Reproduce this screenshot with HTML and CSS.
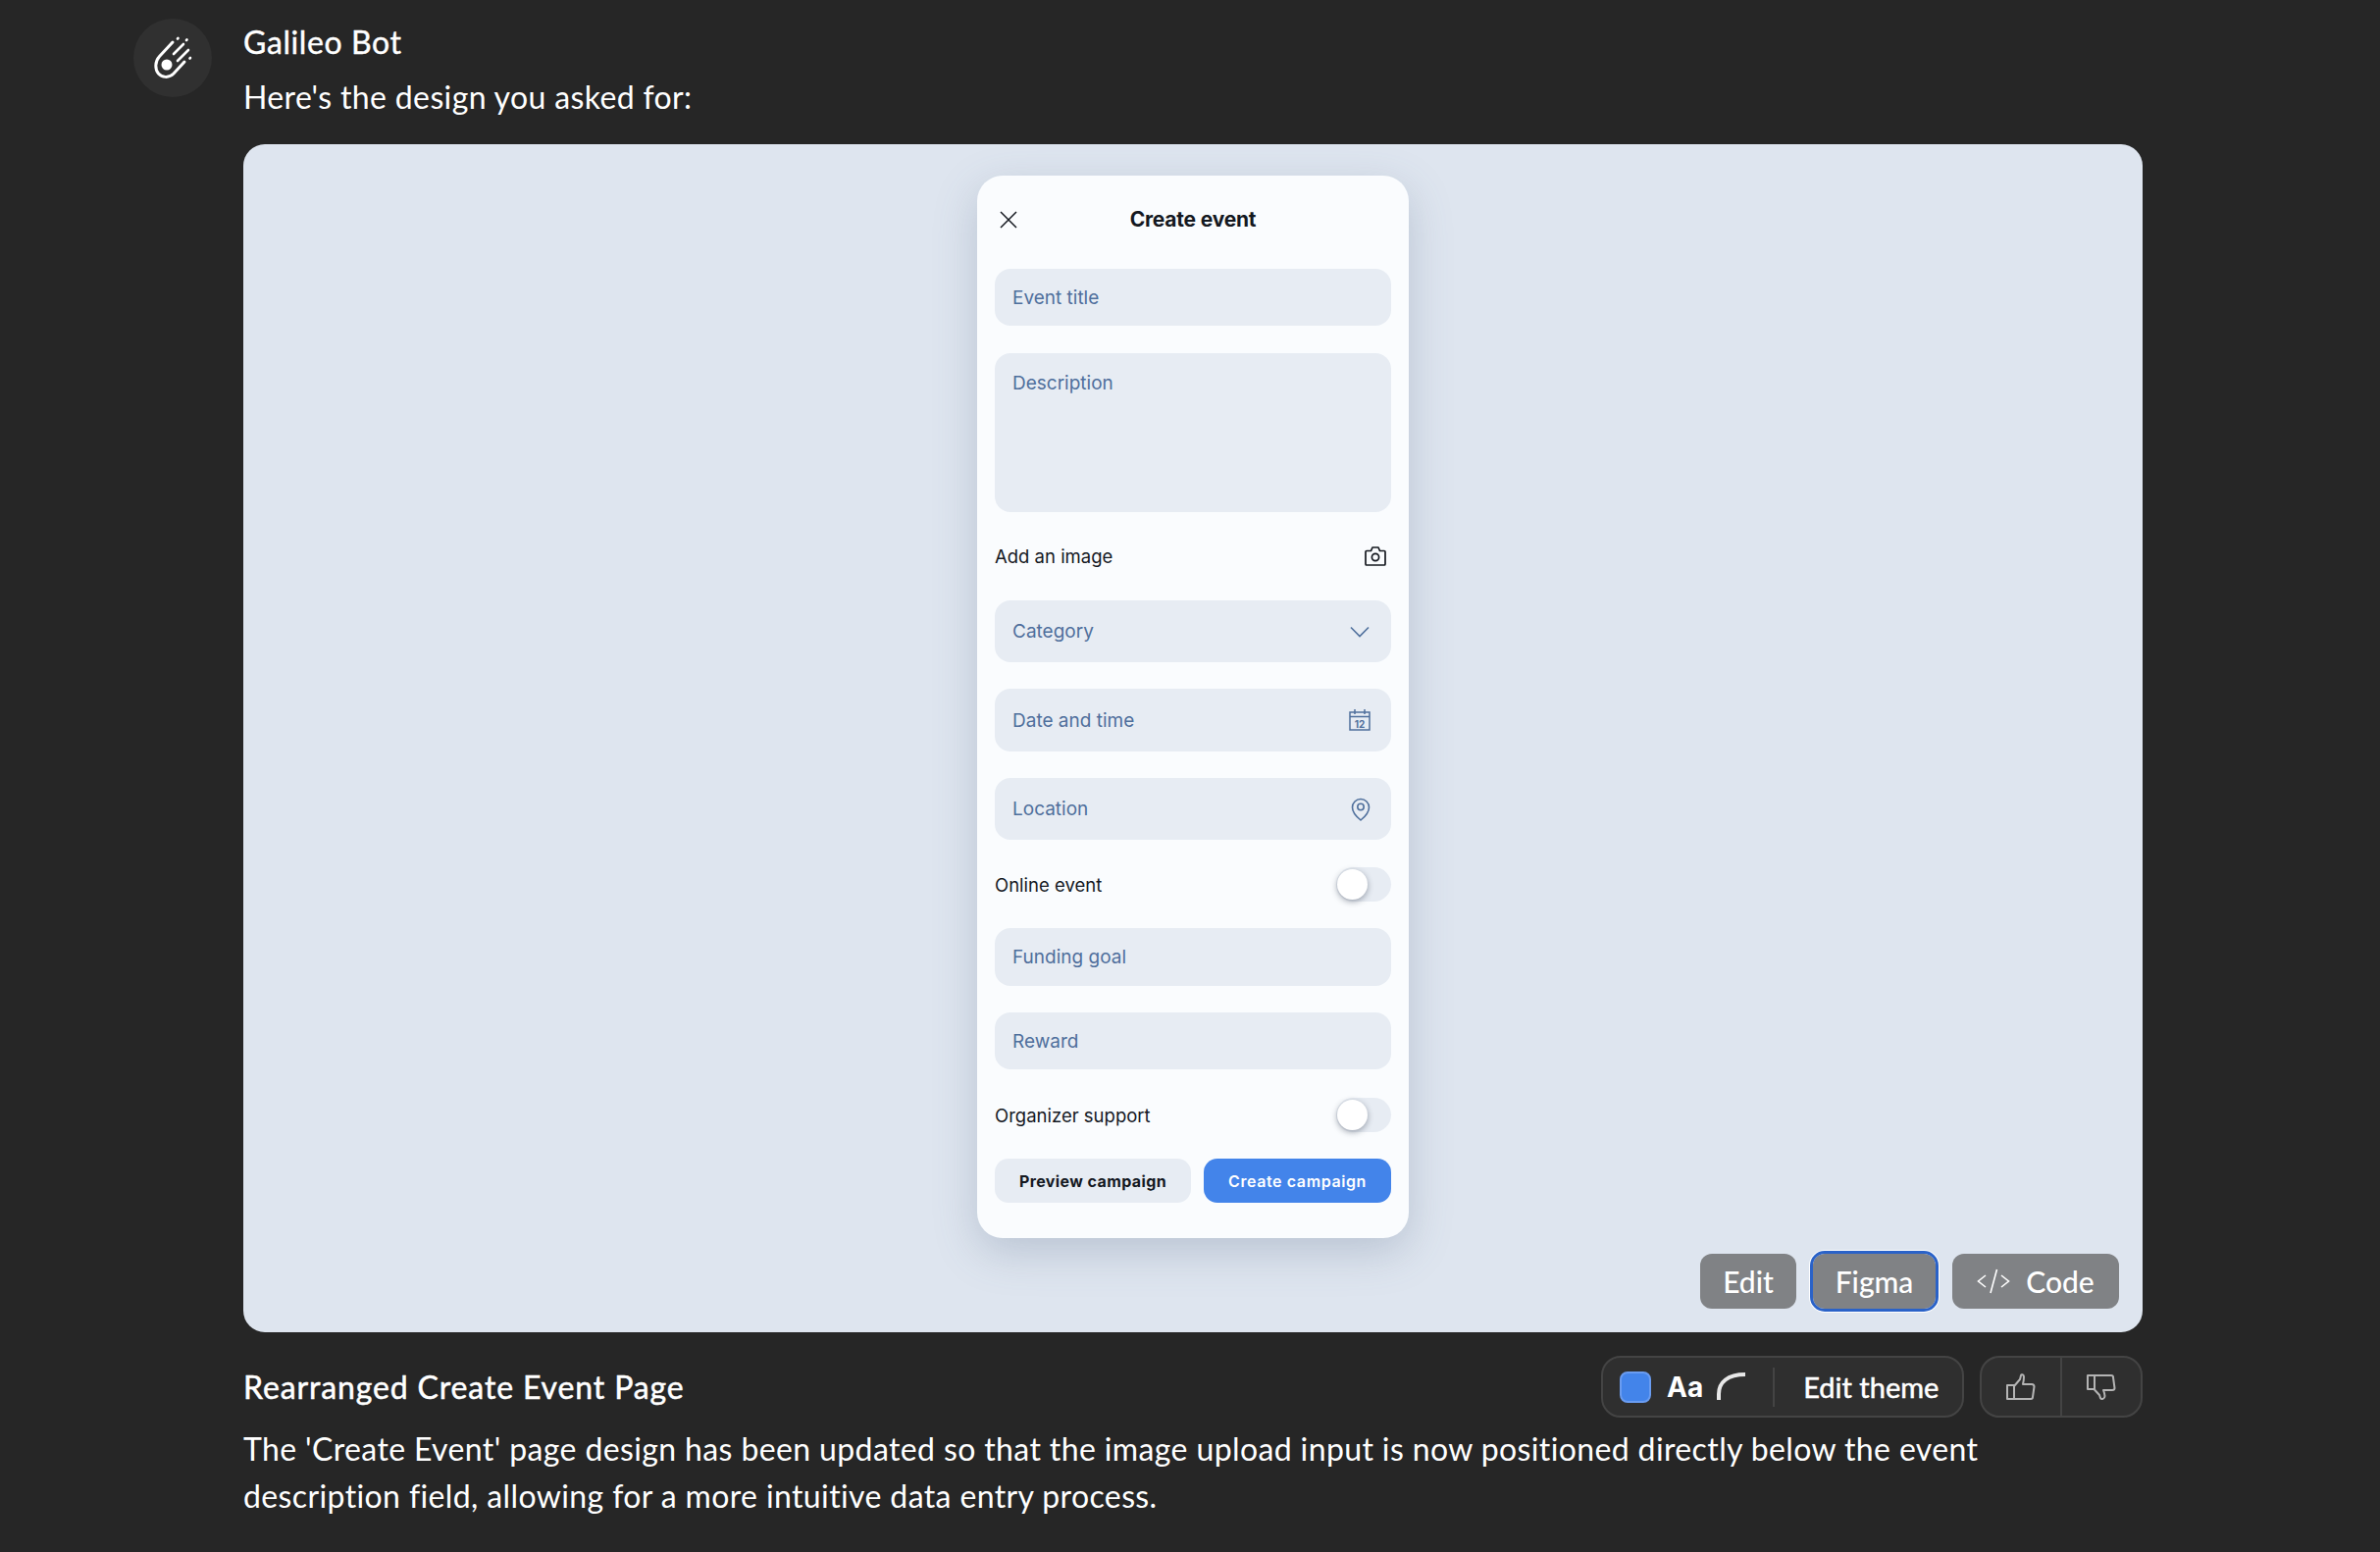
FILE: index.html
```html
<!DOCTYPE html>
<html lang="en">
<head>
<meta charset="utf-8">
<title>Galileo Bot</title>
<link rel="stylesheet" href="styles.css">
</head>
<body>
<main class="chat">
  <div class="avatar">
    <svg width="60" height="60" viewBox="0 0 60 60" fill="none" stroke="#fff" stroke-width="2.600" stroke-linecap="round">
      <circle cx="24" cy="37" r="5.500" fill="#fff" stroke="none"/>
      <path d="M30 14 16.500 28.500C11.500 34 12 42 15.500 46S26 51 31 46L42 34" stroke-width="3"/>
      <path d="M35 10.500l.5-.5M44 12l.5-.5M41 16 31 26M46 22 35 33M47.500 30.500l.5-.5"/>
    </svg>
  </div>
  <div class="content">
    <div class="name">Galileo Bot</div>
    <div class="intro">Here's the design you asked for:</div>
    <section class="preview">
      <div class="card">
        <header class="card-head">
          <svg class="close" width="20" height="20" viewBox="0 0 20 20" fill="none" stroke="#14181f" stroke-width="1.5"><path d="M2 2 18 18M18 2 2 18"/></svg>
          <h2>Create event</h2>
        </header>
        <div class="field f58 first">Event title</div>
        <div class="field area">Description</div>
        <div class="row image-row">
          <span>Add an image</span>
          <svg width="22" height="20" viewBox="0 0 22 20" fill="none" stroke="#14181f" stroke-width="1.7" stroke-linejoin="round"><path d="M2 4.500h4.500L8 1h6l1.500 3.500H20c.6 0 1 .4 1 1V18c0 .6-.4 1-1 1H2c-.6 0-1-.4-1-1V5.500c0-.6.4-1 1-1Z"/><circle cx="11" cy="11" r="3.600"/></svg>
        </div>
        <div class="field f63 cat">
          <span>Category</span>
          <svg width="20" height="12" viewBox="0 0 20 12" fill="none" stroke="#4f6f9c" stroke-width="1.6"><path d="M1 1.500 10 10.500 19 1.500"/></svg>
        </div>
        <div class="field f63 date">
          <span>Date and time</span>
          <svg width="22" height="22" viewBox="0 0 22 22" fill="none" stroke="#4f6f9c" stroke-width="1.500"><path d="M1 3h20v18H1ZM1 7.500h20M6 0v5M16 0v5"/><text x="11" y="18.500" text-anchor="middle" class="cal-num">12</text></svg>
        </div>
        <div class="field f63 loc">
          <span>Location</span>
          <svg width="20" height="24" viewBox="0 0 20 24" fill="none" stroke="#4f6f9c" stroke-width="1.6"><path d="M10 23C5 19 1.500 15 1.500 10a8.500 8.500 0 0 1 17 0C18.500 15 15 19 10 23Z"/><circle cx="10" cy="9.500" r="3.200"/></svg>
        </div>
        <div class="row toggle-row">
          <span>Online event</span>
          <div class="toggle"><div class="knob"></div></div>
        </div>
        <div class="field fund">Funding goal</div>
        <div class="field f58 reward">Reward</div>
        <div class="row toggle-row org">
          <span>Organizer support</span>
          <div class="toggle"><div class="knob"></div></div>
        </div>
        <div class="card-actions">
          <button class="btn-light">Preview campaign</button>
          <button class="btn-blue">Create campaign</button>
        </div>
      </div>
      <div class="overlay-actions">
        <button class="tool edit">Edit</button>
        <button class="tool figma">Figma</button>
        <button class="tool code">
          <svg width="34" height="26" viewBox="0 0 34 26" fill="none" stroke="#fff" stroke-width="1.6"><path d="M9 7 1.500 13 9 19M25 7l7.500 6L25 19M20.500 1 14 25"/></svg>
          Code
        </button>
      </div>
    </section>
    <div class="meta">
      <h3>Rearranged Create Event Page</h3>
      <div class="meta-tools">
        <div class="theme">
          <span class="swatch"></span>
          <span class="aa">Aa</span>
          <svg width="30" height="30" viewBox="0 0 30 30" fill="none" stroke="#e8e8e8" stroke-width="4"><path d="M2 29V23C2 11 11 3 29 3"/></svg>
          <span class="vsep"></span>
          <span class="edit-theme">Edit theme</span>
        </div>
        <div class="votes">
          <span class="vote">
            <svg width="30" height="28" viewBox="0 0 30 28" fill="none" stroke="#b4b4b4" stroke-width="2" stroke-linejoin="round"><path d="M1 12h7v14H1ZM8 13l6-7 1-4c.500-1.500 3-1 3 1.500 0 2.500-.5 5.500-1 7.500h9c1.500 0 2.500 1 2.500 2.500L27 24c0 1-1 2-2 2H8"/></svg>
          </span>
          <span class="vote">
            <svg width="30" height="28" viewBox="0 0 30 28" fill="none" stroke="#b4b4b4" stroke-width="2" stroke-linejoin="round"><path d="M1 2h7v14H1ZM8 2h17c1 0 2 1 2 2l1.500 11c0 1-1 2-2.500 2h-9c1 2.500 1.500 4 1.500 6 0 3-3.500 4-4.500 2l-1-3-5.500-6"/></svg>
          </span>
        </div>
      </div>
    </div>
    <p class="desc">The 'Create Event' page design has been updated so that the image upload input is now positioned directly below the event description field, allowing for a more intuitive data entry process.</p>
  </div>
</main>
</body>
</html>
```
FILE: styles.css
```css
* { box-sizing: border-box; }
html, body { margin: 0; background: #262626; }
body { font-family: "Lato", "Liberation Sans", sans-serif; color: #fff; height: 1582px; overflow: hidden; }
.chat { display: flex; padding: 19px 0 0 136px; gap: 32px; }
.avatar { width: 80px; height: 80px; border-radius: 50%; background: #303030; display: flex; align-items: center; justify-content: center; flex: none; }
.content { width: 1936px; flex: none; }
.name { font-size: 32px; line-height: 48px; height: 48px; letter-spacing: .6px; -webkit-text-stroke: .4px #fff; }
.intro { font-size: 32px; line-height: 48px; height: 48px; margin-top: 8px; letter-spacing: .36px; }
.preview { position: relative; height: 1211px; margin-top: 24px; background: #dee5ef; border-radius: 22px; display: flex; justify-content: center; align-items: flex-start; padding-top: 32px; }
.card { width: 440px; height: 1083px; background: #fafcfe; border-radius: 26px; box-shadow: 0 14px 44px rgba(80, 100, 130, .26); padding: 0 18px; color: #14181f; font-family: "Inter", "Lato", sans-serif; display: flex; flex-direction: column; }
.card-head { position: relative; height: 95px; display: flex; align-items: center; justify-content: center; padding-bottom: 6px; }
.card-head h2 { margin: 0; font-size: 21px; line-height: 26px; font-weight: 700; letter-spacing: -.2px; }
.close { position: absolute; left: 4px; top: 35px; }
.field { display: flex; align-items: center; justify-content: space-between; background: #e7ecf3; border-radius: 16px; padding: 0 18px; color: #4f6f9c; font-size: 19px; flex: none; }
.f58 { height: 58px; }
.f63 { height: 63px; margin-bottom: 27px; }
.date { height: 64px; }
.first { margin-bottom: 28px; }
.area { height: 162px; align-items: flex-start; padding-top: 19px; line-height: 24px; }
.row { display: flex; align-items: center; justify-content: space-between; font-size: 18.500px; color: #14181f; flex: none; }
.image-row { height: 90px; padding-right: 5px; }
.cat svg { margin-right: 4px; }
.date svg { margin-right: 3px; }
.loc svg { margin-right: 3px; }
.toggle-row { height: 35px; margin-top: 1px; }
.fund { height: 59px; margin-top: 27px; margin-bottom: 27px; }
.org { margin-top: 29px; }
.toggle { position: relative; width: 56px; height: 35px; background: #e7ecf3; border-radius: 18px; }
.knob { position: absolute; left: 1px; top: 2px; width: 31px; height: 31px; border-radius: 50%; background: #fff; box-shadow: 0 2px 6px rgba(30, 40, 60, .4); }
.card-actions { display: flex; gap: 13px; margin-top: 27px; }
.card-actions button { height: 45px; border: 0; border-radius: 14px; font-family: "Inter", sans-serif; font-size: 16px; padding: 0; }
.btn-light { width: 200px; background: #e7ecf3; color: #14181f; font-weight: 700; letter-spacing: .4px; }
.btn-blue { width: 191px; background: #4384ea; color: #fff; font-weight: 600; letter-spacing: .6px; }
.overlay-actions { position: absolute; right: 24px; bottom: 24px; display: flex; align-items: center; gap: 17px; }
.tool { height: 56px; border: 0; border-radius: 12px; background: #808285; color: #fff; font-family: "Lato", sans-serif; font-size: 30px; font-weight: 500; padding: 0; display: flex; align-items: center; justify-content: center; }
.edit { width: 98px; }
.figma { width: 125px; outline: 3px solid #2a62c8; box-shadow: 0 0 0 4px #fff; }
.code { width: 170px; gap: 16px; }
.meta { display: flex; justify-content: space-between; align-items: center; height: 63px; margin-top: 24px; }
.meta h3 { margin: 0; font-size: 32px; font-weight: 400; line-height: 48px; letter-spacing: .87px; -webkit-text-stroke: .5px #fff; }
.meta-tools { display: flex; gap: 16px; }
.theme { width: 370px; height: 63px; background: #2f2f2f; border: 2px solid #444; border-radius: 20px; display: flex; align-items: center; padding-left: 17px; }
.swatch { width: 32px; height: 32px; background: #4384ea; border: 2px solid #6a9cf0; border-radius: 8px; }
.aa { font-family: "Inter", sans-serif; font-weight: 700; font-size: 28px; margin-left: 16px; margin-right: 14px; }
.theme svg { margin-top: -2px; }
.vsep { width: 2px; height: 40px; background: #444; margin-left: 27px; margin-right: 29px; }
.edit-theme { font-size: 29px; font-weight: 400; -webkit-text-stroke: .5px #fff; }
.votes { width: 166px; height: 63px; background: #2f2f2f; border: 2px solid #444; border-radius: 20px; display: flex; }
.vote { flex: 1; display: flex; align-items: center; justify-content: center; }
.vote + .vote { border-left: 2px solid #444; }
.desc { margin: 8px 0 0; font-size: 32px; line-height: 48px; padding-right: 100px; letter-spacing: .38px; }
.cal-num { font-family: "Inter", sans-serif; font-size: 10px; font-weight: 700; fill: #4f6f9c; stroke: none; }
```
